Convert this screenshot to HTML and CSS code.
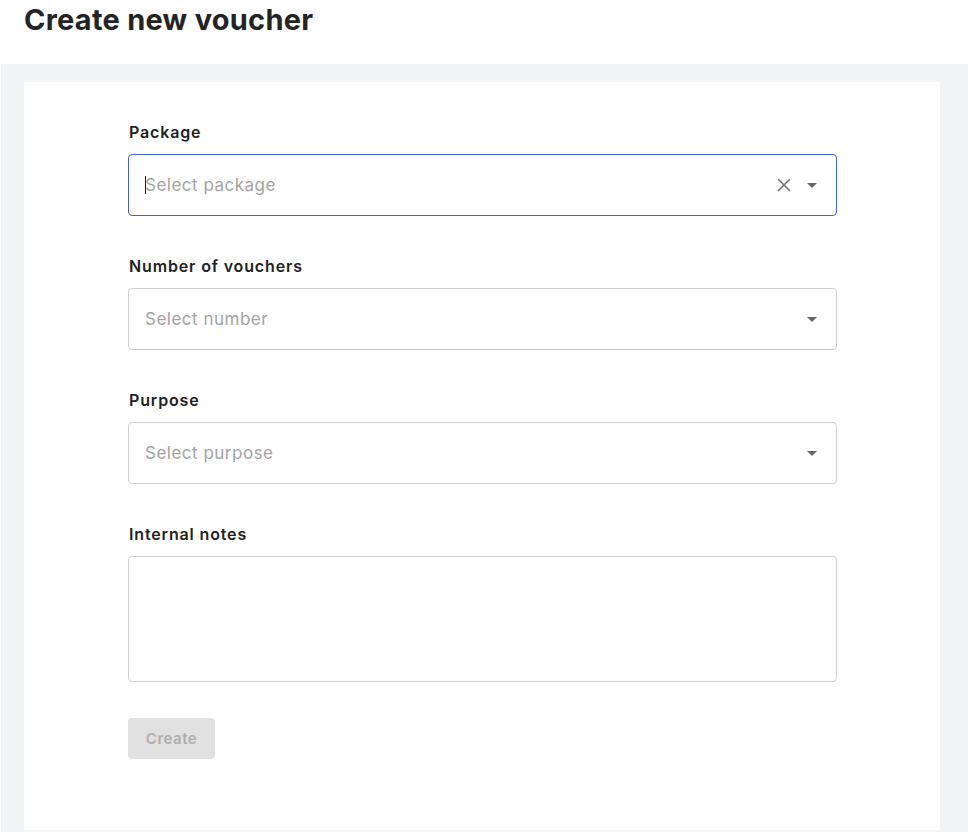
FILE: index.html
```html
<!DOCTYPE html>
<html lang="en">
<head>
<meta charset="utf-8">
<title>Create new voucher</title>
<link rel="stylesheet" href="styles.css">
</head>
<body>
<header class="page-header">
  <h1 class="page-title">Create new voucher</h1>
</header>
<main class="page-body">
  <section class="card">
    <form class="form">
      <div class="field">
        <label class="label">Package</label>
        <div class="select select-focused">
          <span class="caret"></span>
          <span class="placeholder">Select package</span>
          <span class="icons">
            <svg class="clear-icon" width="14" height="14" viewBox="0 0 14 14"><path d="M1.5 1.5L12.5 12.5M12.5 1.5L1.5 12.5" stroke="#707070" stroke-width="1.5" stroke-linecap="round" fill="none"/></svg>
            <svg class="arrow-icon" width="10" height="5" viewBox="0 0 10 5"><path d="M0 0H10L5 5Z" fill="#666"/></svg>
          </span>
        </div>
      </div>
      <div class="field">
        <label class="label">Number of vouchers</label>
        <div class="select">
          <span class="placeholder">Select number</span>
          <span class="icons">
            <svg class="arrow-icon" width="10" height="5" viewBox="0 0 10 5"><path d="M0 0H10L5 5Z" fill="#666"/></svg>
          </span>
        </div>
      </div>
      <div class="field">
        <label class="label">Purpose</label>
        <div class="select">
          <span class="placeholder">Select purpose</span>
          <span class="icons">
            <svg class="arrow-icon" width="10" height="5" viewBox="0 0 10 5"><path d="M0 0H10L5 5Z" fill="#666"/></svg>
          </span>
        </div>
      </div>
      <div class="field">
        <label class="label">Internal notes</label>
        <div class="textarea"></div>
      </div>
      <button type="button" class="btn" disabled>Create</button>
    </form>
  </section>
</main>
</body>
</html>
```

FILE: styles.css
```css
* { box-sizing: border-box; }
html, body { margin: 0; padding: 0; background: #ffffff; }
body {
  font-family: Inter, "Noto Sans", "Liberation Sans", sans-serif;
  color: #222222;
}
.page-header {
  height: 64px;
  padding: 2px 0 0 24px;
}
.page-title {
  margin: 0;
  font-size: 29px;
  line-height: 36px;
  font-weight: 700;
  color: #242424;
  letter-spacing: 0.25px;
}
.page-body {
  margin-left: 1px;
  background: #f2f3f5;
  padding: 18px 28px 2px 23px;
}
.card {
  background: #ffffff;
  width: 916px;
  padding: 40px 0 71px 104px;
}
.form {
  width: 709px;
  display: flex;
  flex-direction: column;
}
.field {
  display: flex;
  flex-direction: column;
  margin-bottom: 40px;
}
.field:last-of-type { margin-bottom: 36px; }
.label {
  font-size: 16px;
  line-height: 20px;
  font-weight: 600;
  color: #222222;
  letter-spacing: 0.85px;
  margin-bottom: 12px;
  padding-left: 1px;
}
.select {
  position: relative;
  height: 62px;
  border: 1px solid #cfcfcf;
  border-radius: 4px;
  display: flex;
  align-items: center;
  padding: 0 19px 0 16px;
  background: #ffffff;
}
.select-focused { border-color: #3f5fd6; }
.placeholder {
  flex: 1;
  font-size: 17px;
  letter-spacing: 0.5px;
  color: #a3a3a3;
  line-height: 22px;
}
.caret {
  position: absolute;
  left: 16px;
  top: 21px;
  width: 1px;
  height: 18px;
  background: #222222;
}
.icons {
  display: flex;
  align-items: center;
  gap: 16px;
}
.clear-icon { display: block; }
.arrow-icon { display: block; }
.textarea {
  height: 126px;
  border: 1px solid #cfcfcf;
  border-radius: 4px;
  background: #ffffff;
}
.btn {
  align-self: flex-start;
  width: 87px;
  height: 41px;
  border: none;
  border-radius: 4px;
  background: #e1e1e1;
  color: #afafaf;
  font-family: Inter, "Noto Sans", "Liberation Sans", sans-serif;
  font-size: 15px;
  letter-spacing: 0.5px;
  font-weight: 600;
  padding: 0;
}
```
